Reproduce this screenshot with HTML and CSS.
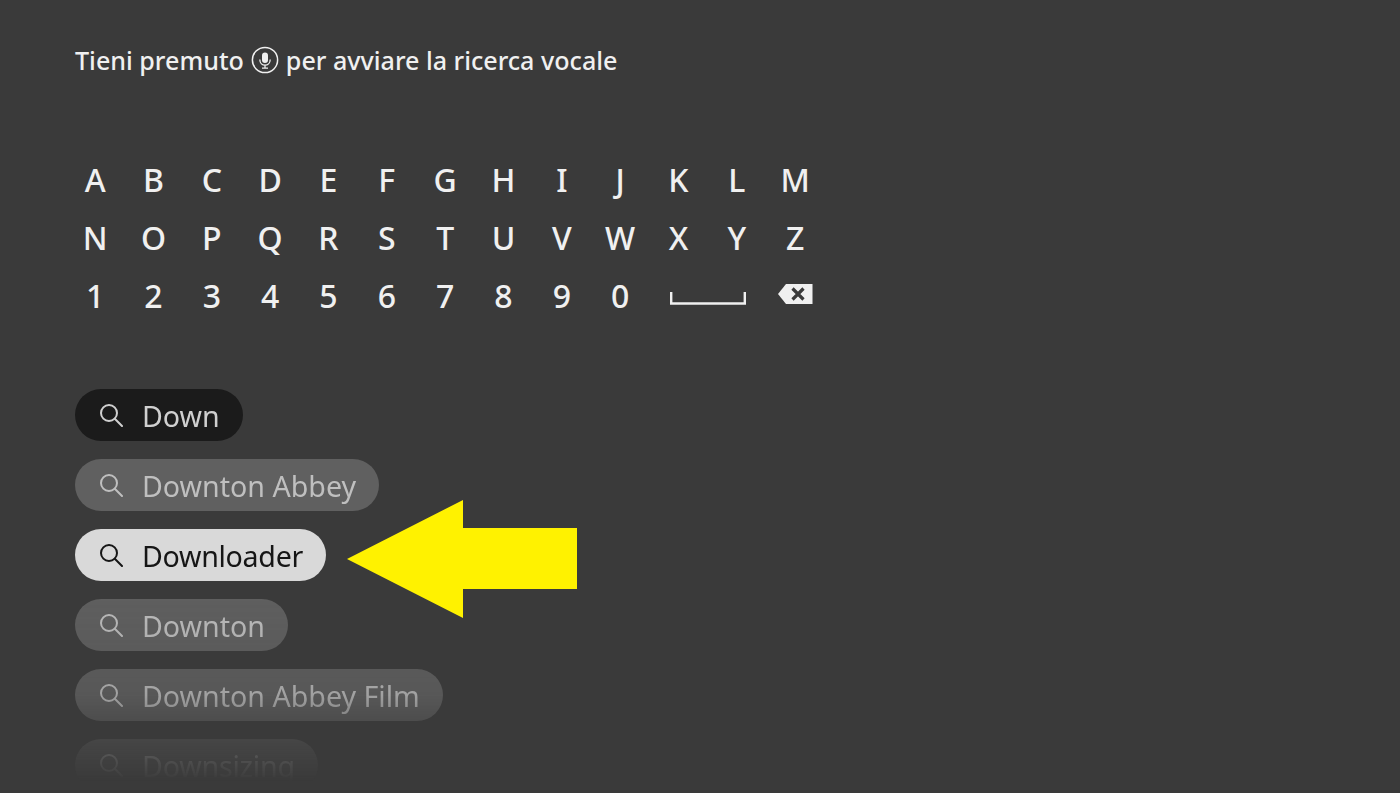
FILE: index.html
```html
<!DOCTYPE html>
<html lang="en">
<head>
    <meta charset="UTF-8">
    <meta name="viewport" content="width=device-width, initial-scale=1.0">
    <title>Ricerca</title>
    <link rel="stylesheet" href="styles.css">
</head>
<body>

<svg width="0" height="0" class="defs">
    <symbol id="search" viewBox="0 0 24 24">
        <circle cx="10" cy="10" r="8" fill="none" stroke="currentColor" stroke-width="2"/>
        <path d="M15.8 15.8 L23 23" fill="none" stroke="currentColor" stroke-width="2" stroke-linecap="round"/>
    </symbol>
</svg>

<p class="hint">
    Tieni premuto
    <svg class="mic" viewBox="0 0 28 28">
        <circle cx="14" cy="14" r="12.6" fill="none" stroke="currentColor" stroke-width="1.5"/>
        <rect x="11" y="6.5" width="6" height="10.5" rx="3" fill="currentColor"/>
        <path d="M8.8 13.5 C8.8 21 19.2 21 19.2 13.5 M14 19.5 V22 M11 22.2 H17" fill="none" stroke="currentColor" stroke-width="1.3"/>
    </svg>
    per avviare la ricerca vocale
</p>

<div class="keyboard">
    <span>A</span><span>B</span><span>C</span><span>D</span><span>E</span><span>F</span><span>G</span><span>H</span><span>I</span><span>J</span><span>K</span><span>L</span><span>M</span>
    <span>N</span><span>O</span><span>P</span><span>Q</span><span>R</span><span>S</span><span>T</span><span>U</span><span>V</span><span>W</span><span>X</span><span>Y</span><span>Z</span>
    <span>1</span><span>2</span><span>3</span><span>4</span><span>5</span><span>6</span><span>7</span><span>8</span><span>9</span><span>0</span>
    <span class="space-key">
        <svg width="76" height="14" viewBox="0 0 76 14"><path d="M1.2 1 V12.5 H74.8 V1" fill="none" stroke="currentColor" stroke-width="2.4"/></svg>
    </span>
    <span class="back-key">
        <svg width="36" height="22" viewBox="0 0 36 22">
            <path d="M9 1 H35.5 V21 H9 L1 11 Z" fill="currentColor"/>
            <path d="M15.5 5.5 L26.5 16.5 M26.5 5.5 L15.5 16.5" fill="none" stroke="#3a3a3a" stroke-width="3.2"/>
        </svg>
    </span>
</div>

<ul class="suggestions">
    <li class="pill pill-typed"><svg class="lens"><use href="#search"/></svg>Down</li>
    <li class="pill"><svg class="lens"><use href="#search"/></svg>Downton Abbey</li>
    <li class="pill pill-focus"><svg class="lens"><use href="#search"/></svg>Downloader</li>
    <li class="pill"><svg class="lens"><use href="#search"/></svg>Downton</li>
    <li class="pill"><svg class="lens"><use href="#search"/></svg>Downton Abbey Film</li>
    <li class="pill pill-last"><svg class="lens"><use href="#search"/></svg>Downsizing</li>
</ul>

<svg class="arrow" width="232" height="120" viewBox="0 0 232 120">
    <path d="M1 60 L117 1 V29 H231 V90 H117 V119 Z" fill="#fff200"/>
</svg>

</body>
</html>
```

FILE: styles.css
```css
/* General Styling */
html, body {
    height: 100%;
}
body {
    position: relative;
    margin: 0;
    padding: 0 0 0 75px;
    box-sizing: border-box;
    overflow: hidden;
    background-color: #3a3a3a;
    color: #f0f0f0;
    font-family: "Noto Sans", Arial, sans-serif;
}
.defs {
    position: absolute;
}

/* Voice hint */
.hint {
    display: flex;
    align-items: center;
    gap: 7px;
    margin: 0;
    padding-top: 43px;
    height: 34px;
    font-size: 25.1px;
    line-height: 34px;
    font-weight: 500;
}
.mic {
    width: 28px;
    height: 28px;
}

/* Keyboard */
.keyboard {
    display: grid;
    grid-template-columns: repeat(13, 58.33px);
    grid-auto-rows: 58.33px;
    margin: 73px 0 0 -9px;
    font-size: 32px;
    font-weight: 500;
}
.keyboard span {
    display: flex;
    justify-content: center;
    align-items: center;
}
.keyboard .space-key {
    grid-column: span 2;
    padding-top: 4px;
}
.keyboard .back-key {
    padding-bottom: 4px;
}

/* Suggestions */
.suggestions {
    display: flex;
    flex-direction: column;
    align-items: flex-start;
    gap: 18px;
    margin: 64px 0 0;
    padding: 0;
    list-style: none;
    font-size: 28.6px;
    -webkit-mask-image: linear-gradient(to bottom, #000 190px, rgba(0,0,0,0.92) 236px, rgba(0,0,0,0.78) 306px, rgba(0,0,0,0.32) 350px, transparent 392px);
    mask-image: linear-gradient(to bottom, #000 190px, rgba(0,0,0,0.92) 236px, rgba(0,0,0,0.78) 306px, rgba(0,0,0,0.32) 350px, transparent 392px);
}
.pill {
    display: flex;
    align-items: center;
    gap: 19px;
    box-sizing: border-box;
    height: 52px;
    padding: 2px 23px 0 24px;
    border-radius: 26px;
    background-color: #606060;
    color: #bfbfbf;
}
.pill-typed {
    background-color: #1b1b1b;
    color: #d0d0d0;
}
.pill-focus {
    background-color: #d9d9d9;
    color: #161616;
    letter-spacing: -0.3px;
}
.pill-last {
    letter-spacing: -0.2px;
}
.lens {
    width: 24px;
    height: 24px;
    margin-top: -2px;
}

.arrow {
    position: absolute;
    left: 346px;
    top: 499px;
}
```
